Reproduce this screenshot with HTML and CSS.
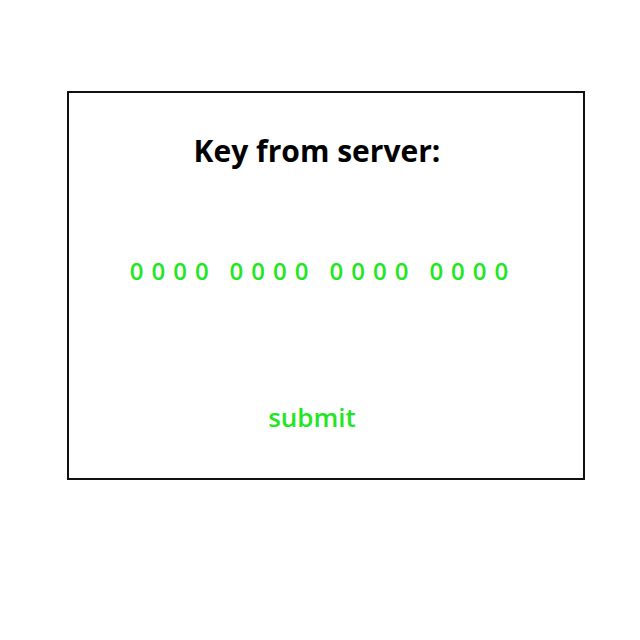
FILE: index.html
```html
<!DOCTYPE html>
<html>
<head>
<meta charset="utf-8">
<link rel="stylesheet" href="styles.css">
</head>
<body>
<div class="card">
  <h1 class="title">Key from server:</h1>
  <div class="key">
    <span class="group">0000</span>
    <span class="group">0000</span>
    <span class="group">0000</span>
    <span class="group">0000</span>
  </div>
  <div class="submit">submit</div>
</div>
</body>
</html>
```
FILE: styles.css
```css
html, body {
  margin: 0;
  padding: 0;
  background: #ffffff;
  font-family: "Open Sans", sans-serif;
}
.card {
  box-sizing: border-box;
  margin: 91px 0 0 67px;
  width: 518px;
  height: 389px;
  border: 2px solid #111111;
  display: flex;
  flex-direction: column;
  align-items: center;
}
.title {
  margin: 38px 18px 0 0;
  font-size: 30px;
  font-weight: 700;
  color: #000000;
  line-height: 40px;
}
.key {
  margin: 85px 6px 0 0;
  display: flex;
  gap: 13px;
  color: #22e622;
  font-size: 24px;
  font-weight: 600;
  line-height: 30px;
}
.group {
  letter-spacing: 8px;
}
.submit {
  margin: 113px 28px 0 0;
  color: #22e622;
  font-size: 26px;
  font-weight: 600;
  line-height: 36px;
}
```
